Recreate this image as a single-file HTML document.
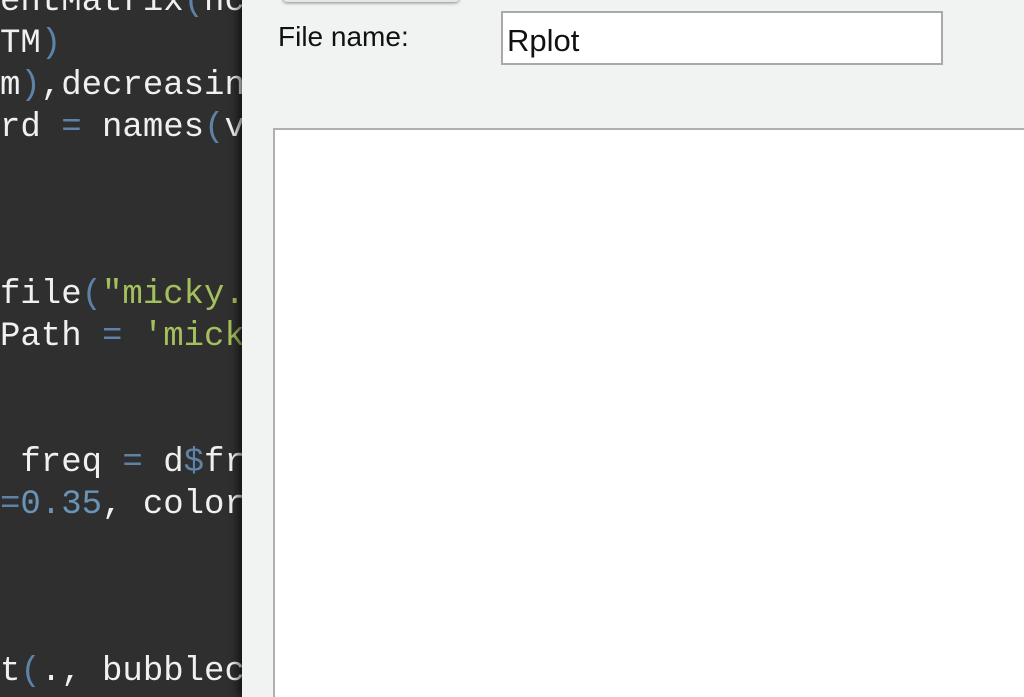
<!DOCTYPE html>
<html><head><style>
html,body{margin:0;padding:0;width:1024px;height:697px;overflow:hidden;background:#2f2f2f;}
.code{position:absolute;left:0;top:0;width:242px;height:697px;background:#2f2f2f;font-family:"Liberation Mono",monospace;font-size:34px;color:#f0f0f0;white-space:pre;overflow:hidden;}
.l{position:absolute;left:0;height:42px;line-height:42px;}
.p{color:#5d83a8}.s{color:#a3c05c}.n{color:#6a93b8}
.dlg{position:absolute;left:242px;top:0;width:782px;height:697px;overflow:hidden;background:#f1f3f2;box-shadow:-4px 0 8px rgba(0,0,0,0.6);font-family:"Liberation Sans",sans-serif;}
.btn{position:absolute;left:41px;top:-20px;width:176px;height:22px;background:#e6e6e6;border-radius:4px;box-shadow:0 1px 3px rgba(0,0,0,0.45);}
.lbl{position:absolute;left:36px;top:21px;font-size:28px;color:#111;}
.inp{position:absolute;left:259px;top:11px;background:#fff;border:2px solid #a9a9a9;box-sizing:border-box;width:442px;height:54px;}
.inp span{position:absolute;left:4px;top:10px;font-size:31px;color:#111;}
.box{position:absolute;left:31px;top:128px;width:749px;height:567px;background:#fff;border:2px solid #b0b0b0;border-right:none;border-bottom:none;}
</style></head><body>
<div class="code">
<div class="l" style="top:-19px">entMatrix<span class="p">(</span>nc</div>
<div class="l" style="top:23px">TM<span class="p">)</span></div>
<div class="l" style="top:65px">m<span class="p">)</span>,decreasin</div>
<div class="l" style="top:107px">rd <span class="p">=</span> names<span class="p">(</span>v</div>
<div class="l" style="top:274px">file<span class="p">(</span><span class="s">"micky.</span></div>
<div class="l" style="top:316px">Path <span class="p">=</span> <span class="s">'mick</span></div>
<div class="l" style="top:442px"> freq <span class="p">=</span> d<span class="p">$</span>fr</div>
<div class="l" style="top:484px"><span class="p">=</span><span class="n">0.35</span>, color</div>
<div class="l" style="top:651px">t<span class="p">(</span>., bubblec</div>
</div>
<div class="dlg">
<div class="btn"></div>
<div class="lbl">File name:</div>
<div class="inp"><span>Rplot</span></div>
<div class="box"></div>
</div>
</body></html>
